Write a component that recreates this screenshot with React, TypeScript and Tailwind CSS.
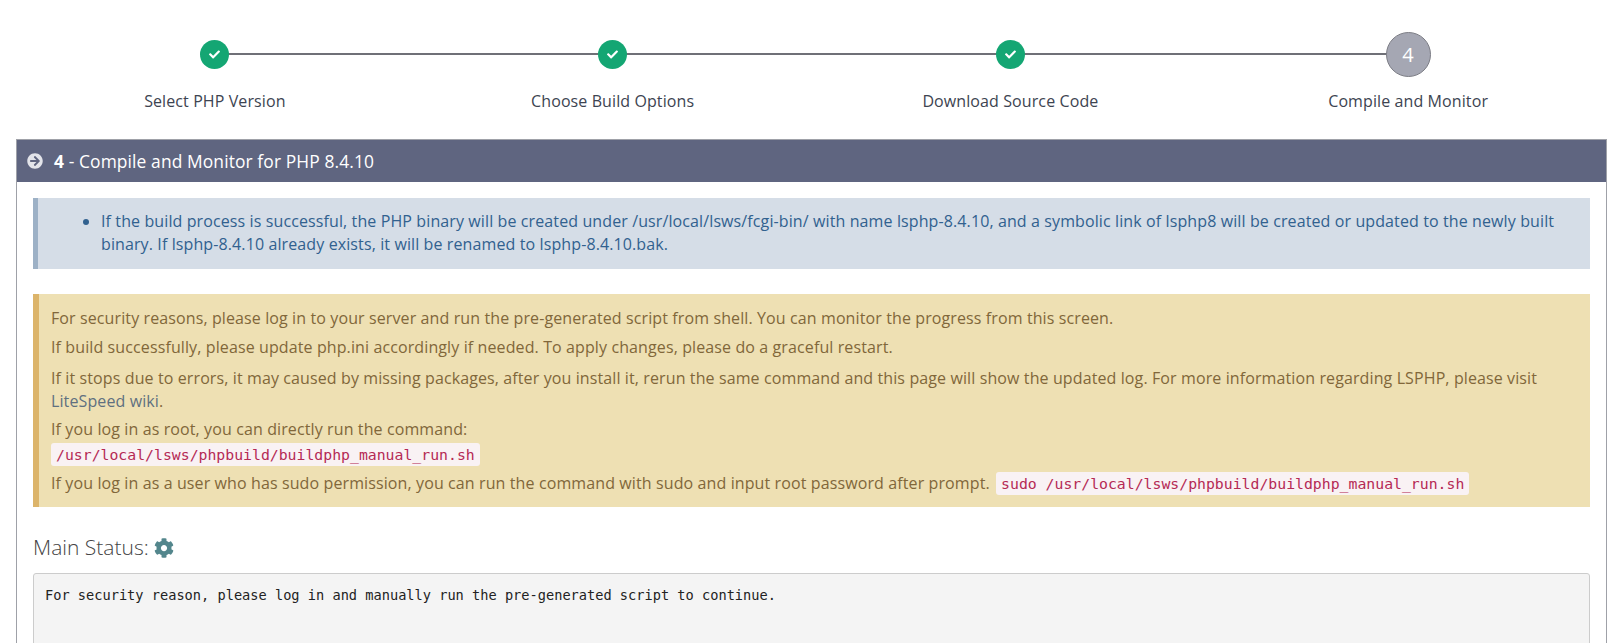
import { FaArrowCircleRight, FaCheck, FaCog } from "react-icons/fa";

const steps = ["Select PHP Version", "Choose Build Options", "Download Source Code", "Compile and Monitor"];

function Step({ label, index }: { label: string; index: number }) {
  const last = index === steps.length - 1;
  return (
    <div className="relative flex flex-col items-center">
      {!last && <div className="absolute left-1/2 top-[53px] h-[2px] w-full bg-[#6f7077]" />}
      <div className="relative flex h-[46px] items-center mt-[31px]">
        {last ? (
          <div className="flex h-[45px] w-[45px] items-center justify-center rounded-full border border-[#7c7d85] bg-[#a5a7b3] text-[20px] text-white">
            4
          </div>
        ) : (
          <div className="flex h-[29px] w-[29px] items-center justify-center rounded-full bg-[#14a673]">
            <FaCheck size={11} className="text-white" />
          </div>
        )}
      </div>
      <div className="mt-[12px] text-[16px] leading-[24px] tracking-[0.1px] text-[#3d4451]">{label}</div>
    </div>
  );
}

export default function App() {
  const code = "rounded-[3px] bg-[#f9f2f4] px-[5px] py-[3px] font-['DejaVu_Sans_Mono','Liberation_Mono',monospace] text-[14.8px] tracking-normal text-[#b52a55]";
  return (
    <div className="h-[643px] overflow-hidden bg-white pl-4 pr-2 font-['Open_Sans',sans-serif] text-[16px] leading-[23px] tracking-[0.11px]">
      <div className="grid grid-cols-4">
        {steps.map((s, i) => (
          <Step key={s} label={s} index={i} />
        ))}
      </div>

      <div className="mt-[26px] border border-[#9fa1a8] border-b-0">
        <div className="flex h-[42px] items-center bg-[#5f6580] pl-[10px] text-[17.4px] text-white">
          <FaArrowCircleRight size={16} className="mr-[11px] text-[#e3e4ea]" />
          <b className="font-bold">4</b>
          <span>&nbsp;- Compile and Monitor for PHP 8.4.10</span>
        </div>

        <div className="h-[470px] px-4 pt-4">
          <div className="border-l-[5px] border-[#9db1c6] bg-[#d5dde7] pt-3 pb-[13px] pr-4 text-[#31618f]">
            <ul className="list-disc pl-[63px]">
              <li>
                If the build process is successful, the PHP binary will be created under /usr/local/lsws/fcgi-bin/ with name lsphp-8.4.10, and a symbolic link of lsphp8 will be created or updated to the newly built binary. If lsphp-8.4.10 already exists, it will be renamed to lsphp-8.4.10.bak.
              </li>
            </ul>
          </div>

          <div className="mt-[25px] border-l-[6px] border-[#dcb46a] bg-[#eee0b3] pt-[13px] pb-[12px] pl-[12px] pr-4 text-[#81673a]">
            <p className="mb-[6px]">For security reasons, please log in to your server and run the pre-generated script from shell. You can monitor the progress from this screen.</p>
            <p className="mb-[8px]">If build successfully, please update php.ini accordingly if needed. To apply changes, please do a graceful restart.</p>
            <p className="mb-[5px]">
              If it stops due to errors, it may caused by missing packages, after you install it, rerun the same command and this page will show the updated log. For more information regarding LSPHP, please visit <span className="text-[#5f7080]">LiteSpeed wiki</span>.
            </p>
            <p className="mb-[2px]">If you log in as root, you can directly run the command:</p>
            <p><code className={code}>/usr/local/lsws/phpbuild/buildphp_manual_run.sh</code></p>
            <p className="mt-[6px]">
              If you log in as a user who has sudo permission, you can run the command with sudo and input root password after prompt. <code className={`ml-[2px] ${code}`}>sudo /usr/local/lsws/phpbuild/buildphp_manual_run.sh</code>
            </p>
          </div>

          <div className="mt-[29px] flex items-center text-[21px] font-light tracking-normal text-[#444]">
            Main Status:
            <FaCog size={20} className="ml-[5px] text-[#53868c]" />
          </div>

          <div className="mt-[14px] h-[200px] rounded-[3px] border border-[#ccc] bg-[#f4f4f4] px-[11px] py-[10px] font-['DejaVu_Sans_Mono',monospace] text-[13.65px] tracking-normal text-[#222]">
            For security reason, please log in and manually run the pre-generated script to continue.
          </div>
        </div>
      </div>
    </div>
  );
}
